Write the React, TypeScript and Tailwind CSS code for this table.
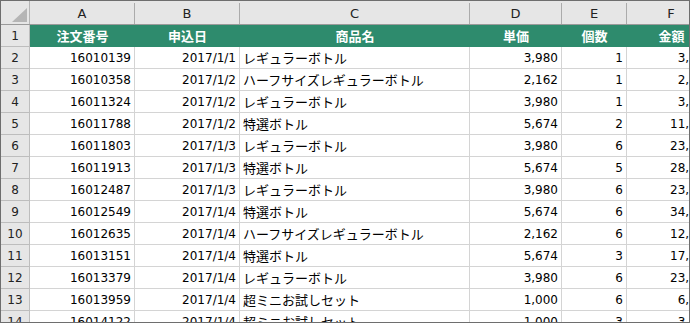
import React from "react";

interface OrderRow {
  id: string;
  date: string;
  product: string;
  price: string;
  qty: string;
  amount: string;
}

const rows: OrderRow[] = [
  { id: "16010139", date: "2017/1/1", product: "レギュラーボトル", price: "3,980", qty: "1", amount: "3,980" },
  { id: "16010358", date: "2017/1/2", product: "ハーフサイズレギュラーボトル", price: "2,162", qty: "1", amount: "2,162" },
  { id: "16011324", date: "2017/1/2", product: "レギュラーボトル", price: "3,980", qty: "1", amount: "3,980" },
  { id: "16011788", date: "2017/1/2", product: "特選ボトル", price: "5,674", qty: "2", amount: "11,348" },
  { id: "16011803", date: "2017/1/3", product: "レギュラーボトル", price: "3,980", qty: "6", amount: "23,880" },
  { id: "16011913", date: "2017/1/3", product: "特選ボトル", price: "5,674", qty: "5", amount: "28,370" },
  { id: "16012487", date: "2017/1/3", product: "レギュラーボトル", price: "3,980", qty: "6", amount: "23,880" },
  { id: "16012549", date: "2017/1/4", product: "特選ボトル", price: "5,674", qty: "6", amount: "34,044" },
  { id: "16012635", date: "2017/1/4", product: "ハーフサイズレギュラーボトル", price: "2,162", qty: "6", amount: "12,972" },
  { id: "16013151", date: "2017/1/4", product: "特選ボトル", price: "5,674", qty: "3", amount: "17,022" },
  { id: "16013379", date: "2017/1/4", product: "レギュラーボトル", price: "3,980", qty: "6", amount: "23,880" },
  { id: "16013959", date: "2017/1/4", product: "超ミニお試しセット", price: "1,000", qty: "6", amount: "6,000" },
  { id: "16014122", date: "2017/1/4", product: "超ミニお試しセット", price: "1,000", qty: "3", amount: "3,000" },
];

const num = "font-['DejaVu_Sans',sans-serif] text-[12px]";
const jp = "font-['Noto_Sans_CJK_JP',sans-serif] text-[13px]";
const cell = "shrink-0 h-full border-r border-[#d4d4d4] flex items-center overflow-hidden whitespace-nowrap";

const App: React.FC = () => {
  return (
    <div className="w-[690px] h-[323px] border border-[#6e6e6e] overflow-hidden bg-white text-black">
      {/* column letters */}
      <div className="flex h-[24px] bg-[#e6e6e6] border-b border-[#9a9a9a] text-[13px] text-[#222] font-['DejaVu_Sans',sans-serif]">
        <div className="w-[29px] shrink-0 h-full border-r border-[#b5b5b5] relative">
          <svg className="absolute right-[2px] bottom-[2px]" width="15" height="14" viewBox="0 0 15 14">
            <polygon points="15,0 15,14 0,14" fill="#b5b5b5" />
          </svg>
        </div>
        {[
          ["A", "w-[105px]"],
          ["B", "w-[105px]"],
          ["C", "w-[230px]"],
          ["D", "w-[92px]"],
          ["E", "w-[65px]"],
          ["F", "w-[89px]"],
        ].map(([l, w]) => (
          <div key={l} className={`${w} shrink-0 flex items-center justify-center border-r border-[#ababab] mt-[2px] h-[21px]`}>
            {l}
          </div>
        ))}
      </div>

      {/* header row */}
      <div className="flex h-[22px]">
        <div className={`w-[29px] shrink-0 flex items-center justify-center bg-[#e6e6e6] border-r border-b border-[#bdbdbd] ${num} text-[#222]`}>
          1
        </div>
        <div className={`flex bg-[#2e8b6d] text-white font-bold ${jp}`}>
          {[
            ["注文番号", "w-[105px]"],
            ["申込日", "w-[105px]"],
            ["商品名", "w-[230px]"],
            ["単価", "w-[92px]"],
            ["個数", "w-[65px]"],
            ["金額", "w-[89px]"],
          ].map(([t, w]) => (
            <div key={t} className={`${w} shrink-0 flex items-center justify-center`}>
              {t}
            </div>
          ))}
        </div>
      </div>

      {/* data rows */}
      {rows.map((r, i) => (
        <div key={r.id} className="flex h-[22px]">
          <div className={`w-[29px] shrink-0 flex items-center justify-center bg-[#e6e6e6] border-r border-b border-[#bdbdbd] ${num} text-[#222]`}>
            {i + 2}
          </div>
          <div className="flex border-b border-[#d4d4d4]">
            <div className={`${cell} w-[105px] justify-end pr-[3px] ${num}`}>{r.id}</div>
            <div className={`${cell} w-[105px] justify-end pr-[3px] ${num}`}>{r.date}</div>
            <div className={`${cell} w-[230px] pl-[3px] ${jp}`}>{r.product}</div>
            <div className={`${cell} w-[92px] justify-end pr-[3px] ${num}`}>{r.price}</div>
            <div className={`${cell} w-[65px] justify-end pr-[3px] ${num}`}>{r.qty}</div>
            <div className={`${cell} w-[89px] justify-end pr-[3px] ${num}`}>{r.amount}</div>
          </div>
        </div>
      ))}
    </div>
  );
};

export default App;
